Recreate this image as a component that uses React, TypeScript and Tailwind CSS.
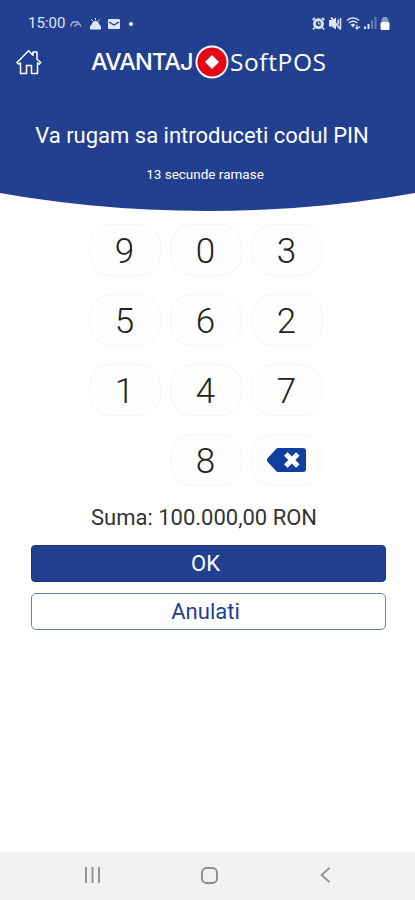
const keys = ["9", "0", "3", "5", "6", "2", "1", "4", "7"];

const keyClass =
  "flex h-[52px] w-[72px] items-center justify-center rounded-[22px] border border-[#f5f5f5] bg-[#fefefe] pt-[2px] text-[35px] font-light leading-none text-[#222222]";

const StatusBar = () => {
  return (
    <div className="flex h-[46px] items-center justify-between pl-[28px] pr-[25px] text-[#dfe6f7]">
      <div className="flex items-center pt-px">
        <span className="w-[37px] whitespace-nowrap text-[15px]">15:00</span>
        <svg className="ml-[5px]" width="12" height="8" viewBox="0 0 12 8" fill="none" stroke="currentColor" strokeWidth="1.4">
          <path d="M1 6.5V4.5L3 2h6M4.500 6.500L7 4h2.500l1.500 2.500" opacity=".7" />
        </svg>
        <svg className="ml-[7px]" width="13" height="12" viewBox="0 0 13 12" fill="currentColor">
          <path d="M6.500 0v2M2.500 1.500l1.800 1.800M10.500 1.500L8.700 3.300" stroke="currentColor" />
          <path d="M3 6.500a3.500 3.500 0 0 1 7 0z" />
          <path d="M1 11.500V8.500l2-2.500h7l2 2.500v3z" />
        </svg>
        <svg className="ml-[6px]" width="12" height="10" viewBox="0 0 12 10">
          <rect width="12" height="10" rx="1" fill="currentColor" />
          <path d="M1 3l5 3 5-3" fill="none" stroke="#233f90" strokeWidth="1.400" />
        </svg>
        <span className="ml-[9px] size-1 rounded-full bg-white" />
      </div>
      <div className="flex items-center">
        <svg width="13" height="13" viewBox="0 0 13 13" fill="none" stroke="currentColor">
          <circle cx="6.500" cy="6.700" r="4" strokeWidth="2.800" />
          <path d="M.7 3L3 .8M12.300 3L10 .8M2.700 10.500L1 12.300M10.300 10.500l1.700 1.800" strokeWidth="1.800" />
          <path d="M6.500 4.500V7h2" />
        </svg>
        <svg className="ml-[4px]" width="13" height="13" viewBox="0 0 13 13" fill="currentColor">
          <path d="M0 3h3l4-2.500v12L3 9.500H0z" />
          <path d="M2 .5l9.500 12" stroke="currentColor" strokeWidth="1.800" />
          <path d="M9.200 2.500v5M11.500 1v11" stroke="currentColor" strokeWidth="1.500" />
        </svg>
        <svg className="ml-[4px]" width="15" height="14" viewBox="0 0 15 14" fill="none" stroke="currentColor" strokeWidth="1.500">
          <path d="M1 4.500a8.500 8.500 0 0 1 12 0M3 7a5.700 5.700 0 0 1 8 0" />
          <path d="M4.500 8.500L7 11.500l2.500-3C8 7.500 6 7.500 4.500 8.500z" fill="currentColor" stroke="none" />
          <path d="M11 9v4M9.500 11.500L11 13l3-2.500" strokeWidth="1.200" />
        </svg>
        <svg className="ml-[3px]" width="13" height="12" viewBox="0 0 13 12" fill="currentColor">
          <path d="M0 9.500h2V12H0zM3.500 7h2v5h-2z" />
          <path d="M7 3.500h2V12H7zM10.500 0h2v12h-2z" opacity=".35" />
        </svg>
        <svg className="ml-[3px]" width="10" height="13" viewBox="0 0 10 13" fill="currentColor">
          <path d="M3 0h4v1.500h1.500V6h-7V1.500H3z" opacity=".55" />
          <rect x=".5" y="5" width="9" height="8" rx="1.500" fill="white" />
        </svg>
      </div>
    </div>
  );
};

const Logo = () => {
  return (
    <div className="flex items-center text-white">
      <span className="w-[104px] whitespace-nowrap font-[Inter,sans-serif] text-[23.500px] font-medium leading-8 tracking-[-0.9px]">
        AVANTAJ
      </span>
      <svg width="34" height="34" viewBox="0 0 34 34">
        <circle cx="17" cy="17" r="16.500" fill="white" />
        <circle cx="17" cy="17" r="14.600" fill="#e30717" />
        <path d="M17 10l7 7-7 7-7-7z" fill="white" />
      </svg>
      <span className="ml-px whitespace-nowrap font-['Open_Sans','Noto_Sans',sans-serif] text-[24.500px] font-medium leading-8 tracking-[0.600px]">
        SoftPOS
      </span>
    </div>
  );
};

const App = () => {
  return (
    <div className="flex h-[900px] w-[415px] flex-col overflow-hidden bg-white font-[Roboto,sans-serif]">
      <header className="h-[211px] shrink-0 bg-[#233f90] text-white [clip-path:circle(1205px_at_50%_-994px)]">
        <StatusBar />
        <div className="flex h-[45px] items-start border-b border-[#1f3985] pl-[16px]">
          <svg className="mt-[3px]" width="26" height="26" viewBox="0 0 26 26" fill="none" stroke="currentColor" strokeWidth="1.500" strokeLinejoin="round">
            <path d="M1 13.500L12.500 1.800l4.500 4.400V3h4v7.200l3.700 3.300-1.500 1.600-1.700-1.200V24.500h-6v-8h-5v8h-6V13.900l-1.800 1.200z" />
          </svg>
          <div className="-mt-px ml-[49px]">
            <Logo />
          </div>
        </div>
        <h1 className="mt-[29px] pr-[11px] text-center text-[22px] leading-8">
          Va rugam sa introduceti codul PIN
        </h1>
        <p className="mt-[12px] pr-[5px] text-center text-[13.500px] leading-5">13 secunde ramase</p>
      </header>

      <main className="flex flex-1 flex-col items-center">
        <div className="mt-[13px] grid grid-cols-3 gap-x-[9px] gap-y-[18px] pr-[4px]">
          {keys.map((key) => (
            <button key={key} className={keyClass}>
              {key}
            </button>
          ))}
          <button className={`${keyClass} col-start-2`}>8</button>
          <button className={keyClass}>
            <svg className="-mt-[2px]" width="39" height="24" viewBox="0 0 39 24">
              <path d="M11 0h25a3 3 0 0 1 3 3v18a3 3 0 0 1-3 3H11a3 3 0 0 1-2-1L.8 14a3 3 0 0 1 0-4L9 1a3 3 0 0 1 2-1z" fill="#10409b" />
              <path d="M18.800 6l12 12M30.800 6l-12 12" stroke="white" strokeWidth="5" />
            </svg>
          </button>
        </div>
        <p className="mt-[16px] pr-[7px] text-[22px] leading-8 text-[#333333]">Suma: 100.000,00 RON</p>
        <div className="mt-[11px] flex w-full flex-col gap-[11px] pl-[31px] pr-[29px]">
          <button className="h-[37px] rounded-[4px] border border-[#1c3585] bg-[#233f90] pr-[6px] text-[22px] leading-none text-white">
            OK
          </button>
          <button className="h-[37px] rounded-[5px] border border-[#6f7fb5] bg-white pr-[6px] text-[22px] leading-none text-[#233f90]">
            Anulati
          </button>
        </div>
      </main>

      <nav className="flex h-[48px] shrink-0 items-center justify-between bg-[#f1f1f1] pb-[2px] pl-[84px] pr-[84px] text-[#8b8b8b]">
        <svg width="17" height="16" viewBox="0 0 17 16" stroke="currentColor" strokeWidth="1.800">
          <path d="M2 0v16M8.500 0v16M15 0v16" />
        </svg>
        <svg className="mr-[3px]" width="17" height="17" viewBox="0 0 17 17" fill="none" stroke="currentColor" strokeWidth="1.900">
          <rect x="1" y="1" width="15" height="15" rx="4.500" />
        </svg>
        <svg width="11" height="16" viewBox="0 0 11 16" fill="none" stroke="currentColor" strokeWidth="1.800">
          <path d="M9.500 .800L1.500 8l8 7.200" />
        </svg>
      </nav>
    </div>
  );
};

export default App;
